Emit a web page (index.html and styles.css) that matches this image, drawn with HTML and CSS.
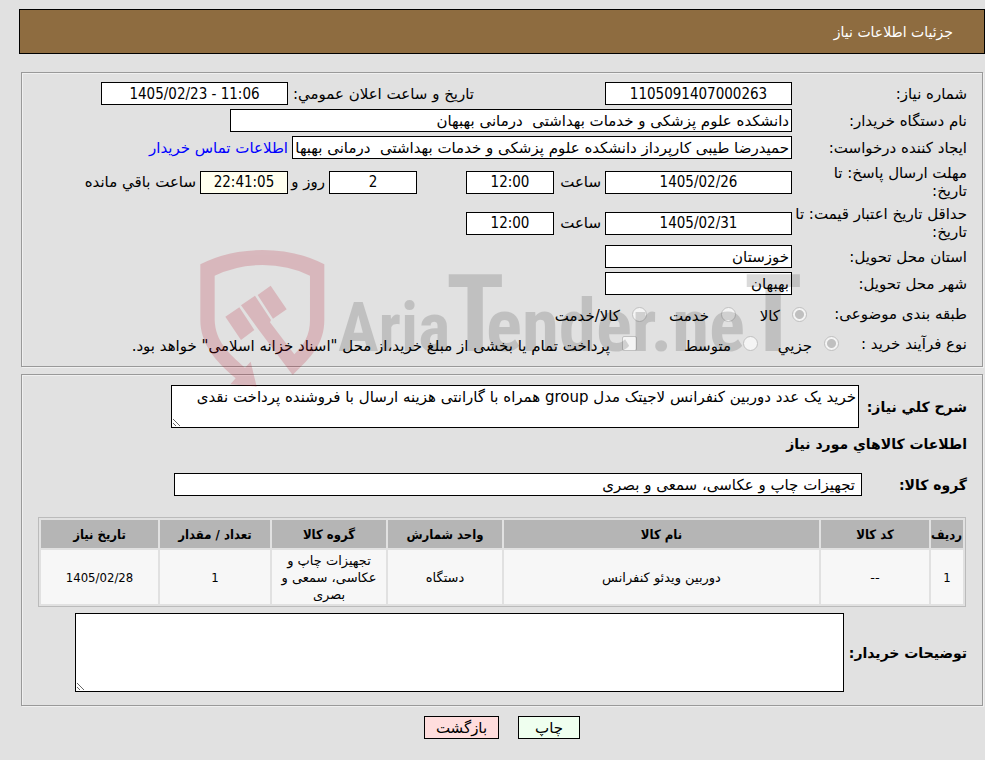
FILE: index.html
```html
<!DOCTYPE html>
<html lang="fa" dir="rtl">
<head>
<meta charset="utf-8">
<title>جزئیات اطلاعات نیاز</title>
<link rel="stylesheet" href="styles.css">
</head>
<body>
<header class="title-bar"><h1>جزئیات اطلاعات نیاز</h1></header>
<main>
<form class="need-form">
  <fieldset class="panel summary">
    <div class="row">
      <label class="name" for="need-no">شماره نیاز:</label>
      <input class="box wide" id="need-no" value="1105091407000263" readonly>
      <label class="announce-label" for="announce">تاریخ و ساعت اعلان عمومي:</label>
      <input class="box wide" id="announce" value="1405/02/23 - 11:06" dir="ltr" readonly>
    </div>
    <div class="row">
      <label class="name" for="org">نام دستگاه خریدار:</label>
      <input class="box text org" id="org" value="دانشکده علوم پزشکی و خدمات بهداشتی  درمانی بهبهان" readonly>
    </div>
    <div class="row">
      <label class="name" for="creator">ایجاد کننده درخواست:</label>
      <input class="box text creator" id="creator" value="حمیدرضا طیبی کارپرداز دانشکده علوم پزشکی و خدمات بهداشتی  درمانی بهبهان" readonly>
      <a href="#contact">اطلاعات تماس خریدار</a>
    </div>
    <div class="row tall">
      <label class="name" for="deadline">مهلت ارسال پاسخ: تا<br>تاریخ:</label>
      <input class="box wide" id="deadline" value="1405/02/26" readonly>
      <label class="hour-label" for="deadline-hour">ساعت</label>
      <input class="box short" id="deadline-hour" value="12:00" readonly>
      <input class="box short days" id="days" aria-label="روز" value="2" readonly>
      <label class="days-label" for="days">روز و</label>
      <input class="box short remain" id="remain" value="22:41:05" readonly>
      <label for="remain">ساعت باقي مانده</label>
    </div>
    <div class="row tall">
      <label class="name" for="validity">حداقل تاریخ اعتبار قیمت: تا<br>تاریخ:</label>
      <input class="box wide" id="validity" value="1405/02/31" readonly>
      <label class="hour-label" for="validity-hour">ساعت</label>
      <input class="box short" id="validity-hour" value="12:00" readonly>
    </div>
    <div class="row">
      <label class="name" for="province">استان محل تحویل:</label>
      <input class="box text wide" id="province" value="خوزستان" readonly>
    </div>
    <div class="row">
      <label class="name" for="city">شهر محل تحویل:</label>
      <input class="box text wide" id="city" value="بهبهان" readonly>
    </div>
    <div class="row choices subject">
      <span class="choice-name">طبقه بندی موضوعی:</span>
      <label class="goods"><input type="radio" name="subject" checked disabled>کالا</label>
      <label class="service"><input type="radio" name="subject" disabled>خدمت</label>
      <label><input type="radio" name="subject" disabled>کالا/خدمت</label>
    </div>
    <div class="row choices process">
      <span class="choice-name">نوع فرآیند خرید :</span>
      <label class="minor"><input type="radio" name="process" checked disabled>جزیي</label>
      <label class="medium"><input type="radio" name="process" disabled>متوسط</label>
      <label><input type="checkbox" disabled>پرداخت تمام یا بخشی از مبلغ خرید،از محل "اسناد خزانه اسلامی" خواهد بود.</label>
    </div>
  </fieldset>

  <fieldset class="panel details">
    <div class="row">
      <label class="strong description-label" for="description">شرح کلي نیاز:</label>
      <textarea class="description" id="description" readonly>خرید یک عدد دوربین کنفرانس لاجیتک مدل group همراه با گارانتی هزینه ارسال با فروشنده پرداخت نقدی</textarea>
    </div>
    <h2>اطلاعات کالاهاي مورد نیاز</h2>
    <div class="row group-row">
      <label class="strong group-label" for="group">گروه کالا:</label>
      <input class="box text group" id="group" value="تجهیزات چاپ و عکاسی، سمعی و بصری" readonly>
    </div>
    <table>
      <colgroup><col class="c-row"><col class="c-code"><col class="c-name"><col class="c-unit"><col class="c-group"><col class="c-count"><col class="c-date"></colgroup>
      <thead><tr><th>ردیف</th><th>کد کالا</th><th>نام کالا</th><th>واحد شمارش</th><th>گروه کالا</th><th>تعداد / مقدار</th><th>تاریخ نیاز</th></tr></thead>
      <tbody><tr><td class="num">1</td><td>--</td><td>دوربین ویدئو کنفرانس</td><td>دستگاه</td><td>تجهیزات چاپ و عکاسی، سمعی و بصری</td><td class="num">1</td><td class="num">1405/02/28</td></tr></tbody>
    </table>
    <div class="row">
      <label class="strong notes-label" for="notes">توضیحات خریدار:</label>
      <textarea class="notes" id="notes" readonly></textarea>
    </div>
  </fieldset>
  <div class="actions">
    <button type="button" class="print">چاپ</button>
    <button type="button" class="back">بازگشت</button>
  </div>
</form>
<svg class="watermark" viewBox="0 0 610 140" aria-hidden="true">
  <g class="shield" transform="translate(-10 -9) scale(.3333)">
    <path d="M31 73Q115 30 218 30T403 73V240C403 310 365 350 308 405L205 268L153 196L195 167L243 240L240 247L313 343C343 313 360 285 360 240V107Q295 75 218 75T74 107V240C76 303 115 340 165 383L182 365L200 440L121 433L137 415C75 363 31 310 31 240Z"/>
    <path d="M106 230L148 202L193 270L153 300ZM203 165L242 137L290 208L249 236Z"/>
  </g>
  <g class="brand">
    <text x="138" y="102">Aria</text>
    <text class="tall-t" x="246" y="102">T</text>
    <text class="rest" x="286" y="102">ender.ne</text>
    <text class="tall-t" x="544" y="102">T</text>
  </g>
</svg>
</main>
</body>
</html>
```
FILE: styles.css
```css
* { box-sizing: border-box; }
body {
  margin: 0;
  padding: 9px 0 21px 19px;
  background: #e1e1e1;
  color: #000;
  font: 15px/18px "DejaVu Sans", sans-serif;
}
input, textarea, button { font: inherit; color: inherit; margin: 0; }
main { position: relative; }
.title-bar {
  display: flex;
  align-items: center;
  height: 45px;
  padding: 0 31px;
  border: 1px solid #000;
  background: #8e6c40;
  color: #fff;
}
h1 { margin: 0; font-size: 14px; font-weight: normal; }
.need-form { padding: 18px 2px 0; }
.panel {
  margin: 0 0 7px;
  border: 1px solid #999;
  box-shadow: inset 1px 1px #f0f0f0, 1px 1px #f0f0f0;
  min-width: 0;
}
.summary { padding: 9px 15px 8px; }
.row { display: flex; align-items: center; gap: 4px; margin-bottom: 4px; white-space: nowrap; }
.name { flex: 0 0 175px; margin-left: -4px; white-space: normal; }
.box {
  height: 23px;
  min-width: 0;
  padding: 0 2px;
  border: 1px solid #000;
  border-radius: 0;
  background: #fff;
  text-align: center;
  font-family: "DejaVu Sans Condensed", "DejaVu Sans", sans-serif;
}
.box.text { text-align: right; font-family: "DejaVu Sans", sans-serif; }
.wide { width: 187px; }
.org { width: 562px; }
.creator { width: 500px; }
.short { width: 88px; }
.announce-label { width: 309px; padding-right: 127px; }
.hour-label { width: 43px; }
.days { margin-right: 45px; }
.days-label { width: 33px; }
.remain { background: #ffffef; }
a { color: #00f; text-decoration: none; }
.tall { min-height: 36px; margin: 5px 0 4px; }
.choices { gap: 0; min-height: 30px; margin: 0; }
.choices label { display: flex; align-items: center; padding-top: 4px; }
.choice-name { flex: 0 0 160px; }
.process .choice-name { flex-basis: 128px; }
.process { min-height: 29px; }
.choices input {
  appearance: none;
  flex: none;
  width: 15px;
  height: 15px;
  margin: 0 0 4px 12px;
  border: 1px solid #c0c0c0;
  border-radius: 2px;
  background: #f4f4f4;
}
.choices input[type="radio"] { border-radius: 50%; }
.choices input:checked { background: radial-gradient(circle, #c0c0c0 4px, #f4f4f4 5px); }
.goods { width: 71px; }
.service { width: 89px; }
.minor { width: 81px; }
.medium { width: 121px; }
.details { padding: 10px 15px 9px; }
.strong { flex: none; font-size: 14px; font-weight: bold; }
textarea {
  display: block;
  padding: 2px;
  border: 1px solid #000;
  background: #fff;
  white-space: pre-wrap;
}
.description-label { width: 104px; }
.description { width: 688px; height: 43px; }
h2 { margin: 7px 0 20px; font-size: 14px; line-height: 18px; }
.group-label { width: 101px; }
.group { width: 688px; padding-right: 6px; }
.group-row { margin-bottom: 21px; }
table {
  width: calc(100% - 2px);
  margin: 0 1px 6px;
  table-layout: fixed;
  border: 1px solid #bbb;
  border-collapse: separate;
  border-spacing: 2px;
  font-size: 13px;
  line-height: 17px;
  text-align: center;
}
th, td { padding: 1px; }
th, .num { font-family: "DejaVu Sans Condensed", "DejaVu Sans", sans-serif; }
th { height: 28px; background: #b5b5b5; white-space: nowrap; }
td { height: 54px; background: #f7f7f7; }
.c-row { width: 32px; }
.c-code { width: 108px; }
.c-unit, .c-group { width: 114px; }
.c-count { width: 110px; }
.c-date { width: 117px; }
.notes-label { width: 119px; }
.notes { width: 769px; height: 79px; }
.actions { display: flex; justify-content: center; gap: 19px; padding-top: 3px; }
button { height: 23px; padding: 0; border: 1px solid #000; border-radius: 0; }
.print { width: 62px; background: #efffef; }
.back { width: 75px; background: #fdd; }
.watermark {
  position: absolute;
  left: 181px;
  top: 195px;
  width: 610px;
  height: 140px;
  pointer-events: none;
}
.shield { fill: #b40019; opacity: .18; }
.brand {
  fill: #000;
  opacity: .14;
  direction: ltr;
  font: bold 68px "Roboto Condensed", Roboto, sans-serif;
}
.rest { font-size: 75px; }
.tall-t { font-size: 108px; }
```
